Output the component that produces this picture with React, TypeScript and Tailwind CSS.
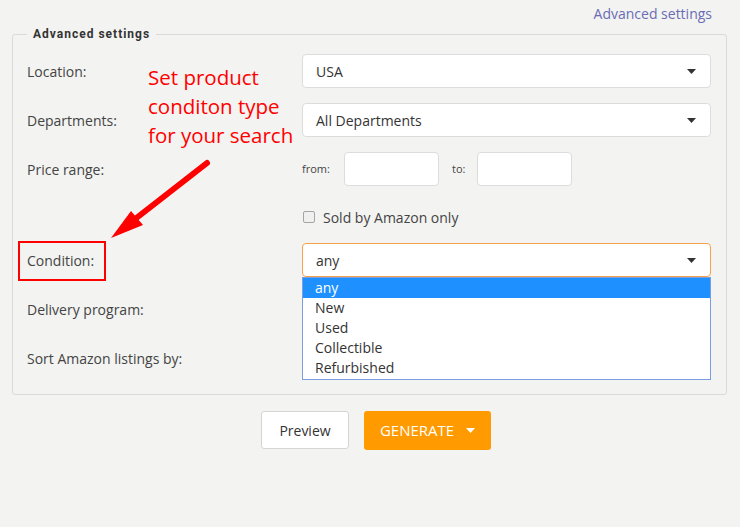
import React from "react";

const Caret = ({ color = "#333" }: { color?: string }) => (
  <svg width="9" height="5" viewBox="0 0 9 5" className="shrink-0">
    <path d="M0 0 L9 0 L4.5 5 Z" fill={color} />
  </svg>
);

const Select = ({ value, active = false }: { value: string; active?: boolean }) => (
  <div
    className={`flex h-[34px] items-center justify-between rounded-[4px] border bg-white pl-[13px] pr-[14px] text-[14px] text-[#333] ${
      active ? "border-[#f7a24b]" : "border-[#dcdcdc]"
    }`}
  >
    <span>{value}</span>
    <Caret />
  </div>
);

const Label = ({ children }: { children: React.ReactNode }) => (
  <div className="flex h-[34px] items-center text-[14px] text-[#444]">{children}</div>
);

export default function App() {
  const options = ["any", "New", "Used", "Collectible", "Refurbished"];
  return (
    <div
      className="relative min-h-[527px] w-[740px] bg-[#f3f3f1]"
      style={{ fontFamily: '"Open Sans", "Liberation Sans", sans-serif' }}
    >
      <div className="flex h-[26px] items-center justify-end pr-[28px]">
        <span className="text-[14px] text-[#6a6db5]">Advanced settings</span>
      </div>

      <fieldset className="ml-[12px] mr-[13px] rounded-[3px] border border-[#dadada] pl-[14px] pr-[15px] pb-[19px] pt-[12px]">
        <legend
          className="px-[6px] text-[12px] font-bold leading-[16px] tracking-[1px] text-[#333]"
          style={{ fontFamily: 'Roboto, "Liberation Sans", sans-serif' }}
        >
          Advanced settings
        </legend>

        <div className="grid grid-cols-[275px_1fr]">
          <Label>Location:</Label>
          <Select value="USA" />

          <div className="col-span-2 h-[15px]" />
          <Label>Departments:</Label>
          <Select value="All Departments" />

          <div className="col-span-2 h-[15px]" />
          <Label>Price range:</Label>
          <div className="flex h-[34px] items-center text-[11px] text-[#444]">
            <span className="w-[42px]">from:</span>
            <div className="h-[34px] w-[95px] rounded-[4px] border border-[#dcdcdc] bg-white" />
            <span className="ml-[13px] w-[25px]">to:</span>
            <div className="h-[34px] w-[95px] rounded-[4px] border border-[#dcdcdc] bg-white" />
          </div>

          <div className="col-span-2 h-[21px]" />
          <div />
          <div className="flex h-[20px] items-center gap-[8px] pl-[1px] text-[14px] text-[#444]">
            <div className="h-[12px] w-[12px] rounded-[2px] border border-[#a5a5a5] bg-[#f0f0f0]" />
            <span>Sold by Amazon only</span>
          </div>

          <div className="col-span-2 h-[16px]" />
          <div className="relative">
            <Label>Condition:</Label>
            <div className="absolute left-[-9px] top-[-2px] h-[40px] w-[88px] border-2 border-[#ff0000]" />
          </div>
          <div className="relative">
            <Select value="any" active />
            <div className="absolute left-0 right-0 top-[34px] z-10 border border-[#7a9fe0] bg-white pb-[1px] text-[14px] leading-[20px] text-[#333]">
              {options.map((o, i) => (
                <div
                  key={o}
                  className={`pl-[12px] ${i === 0 ? "bg-[#1e90ff] text-white" : ""}`}
                >
                  {o}
                </div>
              ))}
            </div>
          </div>

          <div className="col-span-2 h-[15px]" />
          <Label>Delivery program:</Label>
          <Select value="" />

          <div className="col-span-2 h-[15px]" />
          <Label>Sort Amazon listings by:</Label>
          <Select value="" />
        </div>
      </fieldset>

      <div className="mt-[16px] flex justify-center gap-[15px] pl-[12px]">
        <button className="h-[38px] w-[88px] rounded-[3px] border border-[#d5d5d5] bg-white text-[14px] text-[#333]">
          Preview
        </button>
        <button className="flex h-[39px] w-[127px] items-center justify-center gap-[12px] rounded-[3px] bg-[#ff9a00] text-[15px] text-white">
          <span>GENERATE</span>
          <Caret color="#fff" />
        </button>
      </div>

      <div className="pointer-events-none absolute left-[148px] top-[63px] text-[20.5px] leading-[29px] text-[#ff0000]">
        <div>Set product</div>
        <div>conditon type</div>
        <div>for your search</div>
      </div>

      <svg
        className="pointer-events-none absolute left-0 top-0"
        width="740"
        height="527"
        viewBox="0 0 740 527"
      >
        <line x1="207" y1="163" x2="130" y2="223" stroke="#ff0000" strokeWidth="6" strokeLinecap="round" />
        <path d="M111 238 L131 211 L143 225 Z" fill="#ff0000" />
      </svg>
    </div>
  );
}
